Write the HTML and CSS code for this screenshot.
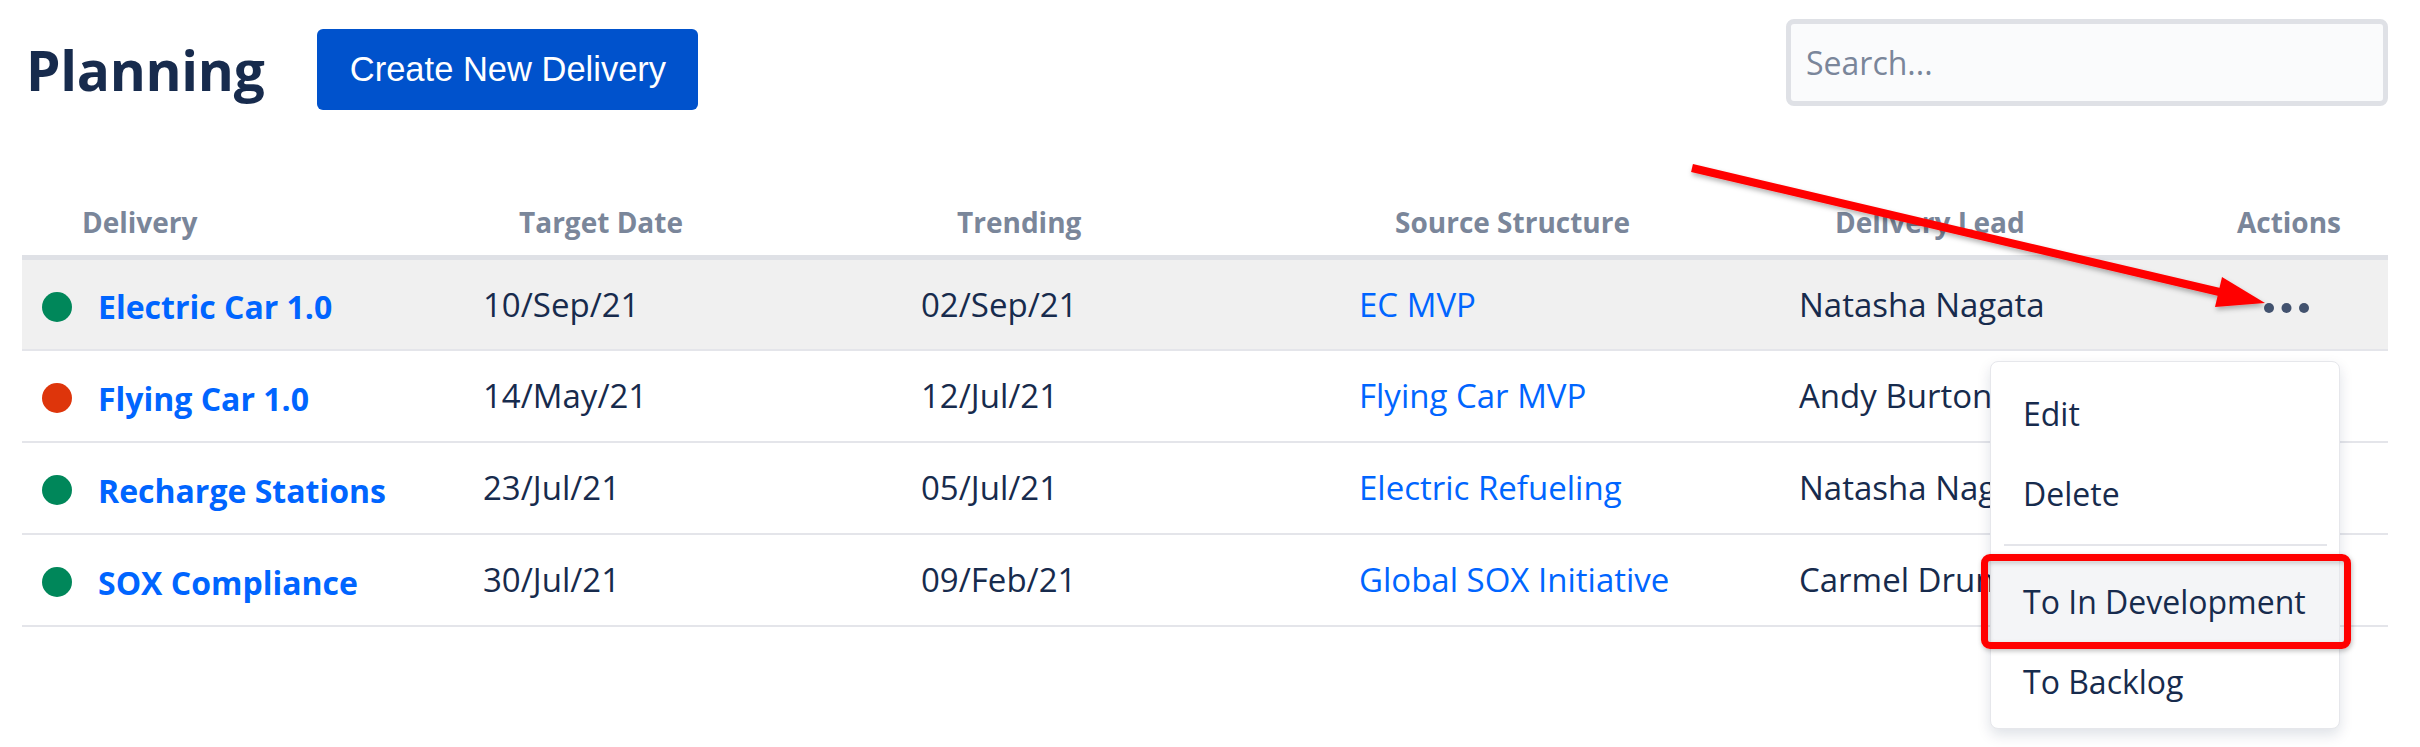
FILE: index.html
```html
<!DOCTYPE html>
<html lang="en">
<head>
<meta charset="utf-8">
<title>Planning</title>
<link rel="stylesheet" href="styles.css">
</head>
<body>
<div class="page">
  <header class="topbar">
    <h1 class="title">Planning</h1>
    <button class="btn-primary" type="button">Create New Delivery</button>
    <div class="spacer"></div>
    <input class="search" type="text" placeholder="Search...">
  </header>

  <table class="grid">
    <colgroup>
      <col class="c1"><col class="c2"><col class="c3"><col class="c4"><col class="c5"><col class="c6">
    </colgroup>
    <thead>
      <tr>
        <th>Delivery</th>
        <th>Target Date</th>
        <th>Trending</th>
        <th>Source Structure</th>
        <th>Delivery Lead</th>
        <th class="act">Actions</th>
      </tr>
    </thead>
    <tbody>
      <tr class="active">
        <td class="name"><span class="dot green"></span><a href="#">Electric Car 1.0</a></td>
        <td>10/Sep/21</td>
        <td>02/Sep/21</td>
        <td><a class="src" href="#">EC MVP</a></td>
        <td>Natasha Nagata</td>
        <td class="act">
          <svg class="more" width="50" height="12" viewBox="0 0 50 12"><circle cx="5" cy="6" r="5"/><circle cx="22.5" cy="6" r="5"/><circle cx="40" cy="6" r="5"/></svg>
        </td>
      </tr>
      <tr>
        <td class="name"><span class="dot red"></span><a href="#">Flying Car 1.0</a></td>
        <td>14/May/21</td>
        <td>12/Jul/21</td>
        <td><a class="src" href="#">Flying Car MVP</a></td>
        <td>Andy Burton</td>
        <td class="act"></td>
      </tr>
      <tr>
        <td class="name"><span class="dot green"></span><a href="#">Recharge Stations</a></td>
        <td>23/Jul/21</td>
        <td>05/Jul/21</td>
        <td><a class="src" href="#">Electric Refueling</a></td>
        <td>Natasha Nagata</td>
        <td class="act"></td>
      </tr>
      <tr>
        <td class="name"><span class="dot green"></span><a href="#">SOX Compliance</a></td>
        <td>30/Jul/21</td>
        <td>09/Feb/21</td>
        <td><a class="src" href="#">Global SOX Initiative</a></td>
        <td>Carmel Drummond</td>
        <td class="act"></td>
      </tr>
    </tbody>
  </table>

  <div class="menu">
    <div class="menu-item">Edit</div>
    <div class="menu-item">Delete</div>
    <div class="menu-sep"></div>
    <div class="menu-item hl">To In Development<span class="callout"></span></div>
    <div class="menu-item">To Backlog</div>
  </div>

  <svg class="arrow" width="2420" height="747" viewBox="0 0 2420 747">
    <defs>
      <filter id="sh" x="-10%" y="-50%" width="120%" height="200%">
        <feDropShadow dx="1" dy="3" stdDeviation="2.5" flood-color="#000" flood-opacity="0.3"/>
      </filter>
    </defs>
    <g filter="url(#sh)" fill="#ff0000">
      <line x1="1692" y1="168" x2="2228" y2="294" stroke="#ff0000" stroke-width="8"/>
      <polygon points="2265,303 2222,277 2215,307"/>
    </g>
  </svg>
</div>
</body>
</html>
```

FILE: styles.css
```css
* { box-sizing: border-box; }

html, body {
  margin: 0;
  padding: 0;
  background: #ffffff;
}

body {
  font-family: "Open Sans", "Noto Sans", sans-serif;
  color: #172b4d;
  width: 2420px;
  height: 747px;
  overflow: hidden;
}

.page {
  position: relative;
  padding: 19px 32px 0 22px;
  height: 747px;
}

.topbar {
  display: flex;
  align-items: flex-start;
}

.title {
  margin: 11px 0 0 4px;
  font-size: 55px;
  line-height: 80px;
  font-weight: 700;
  color: #172b4d;
  letter-spacing: -0.3px;
}

.btn-primary {
  margin: 10px 0 0 53px;
  height: 81px;
  width: 381px;
  padding: 0;
  border: 0;
  border-radius: 6px;
  background: #0052cc;
  color: #ffffff;
  font-family: "Liberation Sans", Arial, sans-serif;
  font-size: 34.5px;
}

.spacer { flex: 1; }

.search {
  width: 602px;
  height: 87px;
  border: 5px solid #dfe1e6;
  border-radius: 8px;
  background: #fafbfc;
  padding: 0 0 0 15px;
  font-family: "Open Sans", sans-serif;
  font-size: 32px;
  color: #172b4d;
  outline: none;
}

.search::placeholder {
  color: #7a869a;
}

.grid {
  margin-top: 92px;
  width: 2366px;
  border-collapse: collapse;
  table-layout: fixed;
}

.c1 { width: 437px; }
.c2 { width: 438px; }
.c3 { width: 438px; }
.c4 { width: 440px; }
.c5 { width: 437px; }
.c6 { width: 176px; }

.grid th {
  text-align: left;
  font-size: 28px;
  line-height: 40px;
  font-weight: 700;
  color: #7a869a;
  padding: 0 0 13px 60px;
  border-bottom: 5px solid #dfe1e6;
  white-space: nowrap;
}

.grid th.act {
  text-align: center;
  padding: 0 22px 13px 0;
}

.grid td {
  height: 92px;
  padding: 0 0 0 24px;
  font-size: 33px;
  color: #172b4d;
  border-bottom: 2px solid #e4e5ea;
  white-space: nowrap;
  overflow: hidden;
  vertical-align: middle;
}

.grid tr.active td {
  background: #f0f0f0;
}

.grid td.name {
  padding-left: 20px;
}

.grid td.name a {
  font-size: 32px;
  font-weight: 700;
  color: #0065ff;
  text-decoration: none;
  vertical-align: middle;
}

.dot {
  display: inline-block;
  width: 30px;
  height: 30px;
  border-radius: 50%;
  margin-right: 26px;
  vertical-align: middle;
}

.dot.green { background: #00875a; }
.dot.red { background: #de350b; }

a.src {
  color: #0065ff;
  text-decoration: none;
}

.grid td.act {
  text-align: center;
  padding: 0 22px 0 0;
}

.more {
  display: inline-block;
  vertical-align: middle;
  fill: #42526e;
}

.menu {
  position: absolute;
  left: 1990px;
  top: 361px;
  width: 350px;
  height: 368px;
  padding: 12px 0 8px;
  background: #ffffff;
  border: 1px solid #e6e7eb;
  border-radius: 8px;
  box-shadow: 0 6px 14px rgba(9, 30, 66, 0.13);
}

.menu-item {
  position: relative;
  height: 80px;
  line-height: 80px;
  padding-left: 32px;
  font-size: 32px;
  color: #172b4d;
  white-space: nowrap;
}

.menu-item.hl {
  background: #f4f5f7;
}

.menu-sep {
  height: 2px;
  margin: 10px 12px 16px 13px;
  background: #e4e5ea;
}

.callout {
  position: absolute;
  left: -10px;
  right: -12px;
  top: -8px;
  bottom: -7px;
  border: 7px solid #ff0000;
  border-radius: 9px;
  box-shadow: 1px 2px 5px rgba(0, 0, 0, 0.25), inset 1px 2px 5px rgba(0, 0, 0, 0.2);
}

.arrow {
  position: absolute;
  left: 0;
  top: 0;
  pointer-events: none;
}
```
